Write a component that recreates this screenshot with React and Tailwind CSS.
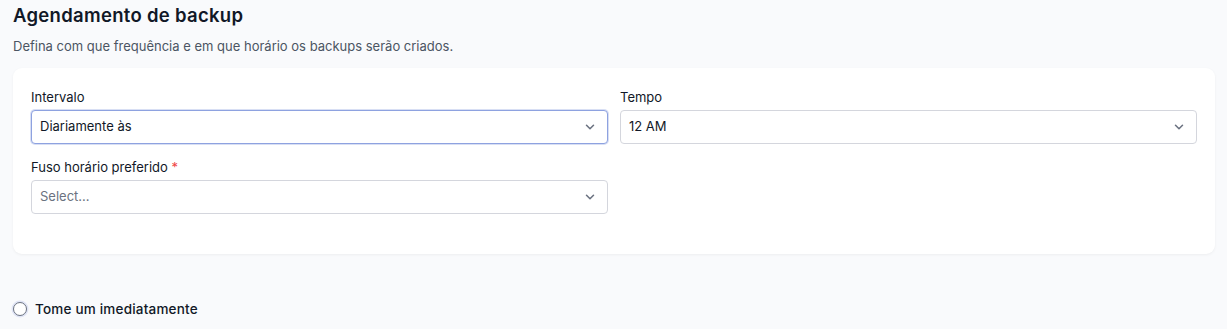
import React from "react";

function Chevron() {
  return (
    <svg width="14" height="14" viewBox="0 0 24 24" fill="none" stroke="#6b7280" strokeWidth="2.6" strokeLinecap="round" strokeLinejoin="round">
      <path d="M6 9l6 6 6-6" />
    </svg>
  );
}

function Select({ value, placeholder, focused }) {
  return (
    <div
      className={
        "flex h-[34px] items-center justify-between rounded-[4px] border bg-white pl-[8px] pr-[10px] " +
        (focused
          ? "border-[#8ea2e0] shadow-[0_0_0_1px_rgba(142,162,224,0.35)]"
          : "border-[#d4d6dd]")
      }
    >
      <span className={"text-[13px] " + (value ? "text-[#111827]" : "text-[#6b7280]")}>
        {value || placeholder}
      </span>
      <Chevron />
    </div>
  );
}

export default function App() {
  return (
    <div
      className="min-h-[329px] w-full bg-[#f9fafc] pl-[13px] pr-[12px] pt-[2px] text-[#111827]"
      style={{ fontFamily: "Inter, 'Noto Sans', sans-serif" }}
    >
      <h1 className="text-[18.5px] font-semibold leading-[26px] tracking-[0.3px] text-[#111827]">Agendamento de backup</h1>
      <p className="mt-[9px] text-[13px] leading-[18px] text-[#4b5563]">
        Defina com que frequência e em que horário os backups serão criados.
      </p>
      <div className="mt-[13px] h-[186px] rounded-[9px] bg-white pl-[18px] pr-[18px] pt-[20px] shadow-[0_1px_3px_rgba(0,0,0,0.05)]">
        <div className="grid grid-cols-2 gap-x-[12px]">
          <div>
            <label className="block text-[13px] leading-[18px] text-[#111827]">Intervalo</label>
            <div className="mt-[4px]">
              <Select value="Diariamente às" focused />
            </div>
          </div>
          <div>
            <label className="block text-[13px] leading-[18px] text-[#111827]">Tempo</label>
            <div className="mt-[4px]">
              <Select value="12 AM" />
            </div>
          </div>
          <div className="mt-[14px]">
            <label className="block text-[13px] leading-[18px] text-[#111827]">
              Fuso horário preferido <span className="text-[#ef4444]">*</span>
            </label>
            <div className="mt-[4px]">
              <Select placeholder="Select..." />
            </div>
          </div>
        </div>
      </div>
      <div className="mt-[45px] flex items-center gap-[8px]">
        <span className="h-[14px] w-[14px] rounded-full border border-[#6b7280] bg-white shadow-[0_0_0_1.5px_#e0e4f5]"></span>
        <span className="text-[13.5px] font-medium tracking-[0.2px] text-[#111827]">Tome um imediatamente</span>
      </div>
    </div>
  );
}
